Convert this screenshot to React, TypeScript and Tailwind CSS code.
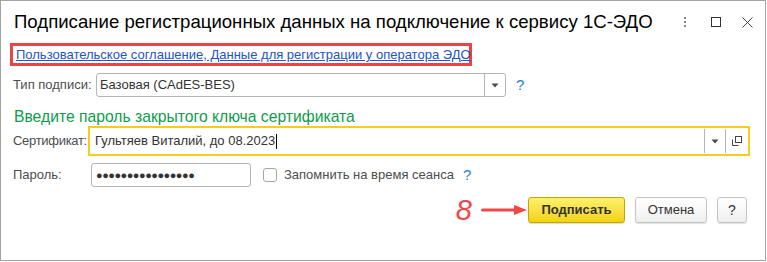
import React from 'react';

const font = { fontFamily: '"Liberation Sans", Arial, sans-serif' };

function Help() {
  return <span className="text-[15px] leading-none text-[#1a84d0]">?</span>;
}

function DropArrow() {
  return (
    <svg width="8" height="5" viewBox="0 0 8 5">
      <path d="M0.5 0.5h7L4 4.5z" fill="#4a4a4a" />
    </svg>
  );
}

export default function App() {
  return (
    <div className="bg-white w-[767px] h-[262px]" style={font}>
      <div className="w-[766px] h-[261px] border border-[#a3a3a3] flex flex-col">
        {/* header */}
        <div className="flex items-start h-[42px] pl-[13px] pt-[10px]">
          <h1 className="text-[18.6px] leading-[22px] text-black whitespace-nowrap">
            Подписание регистрационных данных на подключение к сервису 1С-ЭДО
          </h1>
          <div className="ml-auto flex items-center pt-[5px] pr-[12px]">
            <svg width="4" height="12" viewBox="0 0 4 12" className="mr-[24px]">
              <rect x="1" y="1" width="2" height="2" fill="#8a8a8a" />
              <rect x="1" y="5" width="2" height="2" fill="#8a8a8a" />
              <rect x="1" y="9" width="2" height="2" fill="#8a8a8a" />
            </svg>
            <svg width="10" height="10" viewBox="0 0 10 10" className="mr-[21px]">
              <rect x="0.5" y="0.5" width="9" height="9" fill="none" stroke="#333" />
            </svg>
            <svg width="11" height="11" viewBox="0 0 11 11">
              <path d="M0.5 0.5l10 10M10.5 0.5l-10 10" stroke="#444" strokeWidth="1" />
            </svg>
          </div>
        </div>

        {/* link in annotation frame */}
        <div className="ml-[9px] w-[462px] h-[23px] border-[3px] border-[#ec4346] flex items-center pl-[3px]">
          <a href="#" className="text-[13px] leading-[15px] text-[#2054c8] underline whitespace-nowrap">
            Пользовательское соглашение, Данные для регистрации у оператора ЭДО
          </a>
        </div>

        {/* signature type */}
        <div className="flex items-center mt-[7px] pl-[12px] h-[24px]">
          <span className="w-[83px] shrink-0 text-[13px] text-[#4d4d4d] whitespace-nowrap">Тип подписи:</span>
          <div className="w-[410px] h-[24px] border border-[#b5b5b5] rounded-[3px] flex items-center">
            <span className="flex-1 pl-[3px] text-[13px] text-[#333]">Базовая (CAdES-BES)</span>
            <div className="w-[21px] h-full border-l border-[#b5b5b5] flex items-center justify-center">
              <DropArrow />
            </div>
          </div>
          <span className="ml-[10px]"><Help /></span>
        </div>

        {/* heading */}
        <div className="pl-[13px] mt-[11px] text-[15.7px] leading-[18px] text-[#0e9b4a] whitespace-nowrap">
          Введите пароль закрытого ключа сертификата
        </div>

        {/* certificate */}
        <div className="flex items-center mt-[0px] pl-[12px] h-[30px]">
          <span className="w-[75px] shrink-0 text-[13px] tracking-[-0.3px] text-[#4d4d4d] whitespace-nowrap">Сертификат:</span>
          <div className="w-[662px] h-[30px] border-2 border-[#f8cb1c] flex items-center">
            <span className="flex-1 pl-[5px] text-[13px] text-[#333] flex items-center">
              Гультяев Виталий, до 08.2023
              <span className="inline-block w-px h-[15px] bg-black ml-[1px]" />
            </span>
            <div className="w-[21px] h-[24px] border-l border-[#b5b5b5] flex items-center justify-center">
              <DropArrow />
            </div>
            <div className="w-[23px] h-[24px] border-l border-[#b5b5b5] flex items-center justify-center">
              <svg width="10" height="10" viewBox="0 0 10 10">
                <rect x="3.5" y="0.5" width="6" height="6" fill="none" stroke="#444" />
                <path d="M0.5 3.5v6h6" fill="none" stroke="#444" />
              </svg>
            </div>
          </div>
        </div>

        {/* password */}
        <div className="flex items-center mt-[7px] pl-[12px] h-[24px]">
          <span className="w-[78px] shrink-0 text-[13px] text-[#4d4d4d]">Пароль:</span>
          <div className="w-[160px] h-[24px] border border-[#b5b5b5] rounded-[3px] flex items-center pl-[4px]">
            <span className="text-[11px] tracking-[-0.5px] text-[#333]">●●●●●●●●●●●●●●●●</span>
          </div>
          <span className="ml-[12px] w-[14px] h-[14px] border border-[#a5a5a5] rounded-[3px] bg-white" />
          <span className="ml-[7px] text-[13px] text-[#4d4d4d]">Запомнить на время сеанса</span>
          <span className="ml-[9px]"><Help /></span>
        </div>

        {/* buttons */}
        <div className="flex items-center justify-end mt-[10px] pr-[18px] h-[26px]">
          <span className="text-[29px] leading-none italic text-[#f04848] mr-[9px]">8</span>
          <svg width="47" height="12" viewBox="0 0 47 12">
            <path d="M1.5 6h34" stroke="#f04848" strokeWidth="3" strokeLinecap="round" />
            <path d="M33 1l13 5-13 5z" fill="#f04848" />
          </svg>
          <button className="w-[97px] h-[26px] rounded-[3px] border border-[#c2a800] bg-gradient-to-b from-[#fff16a] to-[#f2d200] text-[13px] font-bold text-[#333] shadow-[0_1px_1px_rgba(0,0,0,0.15)]">
            Подписать
          </button>
          <button className="ml-[10px] w-[72px] h-[26px] rounded-[3px] border border-[#c4c4c4] bg-gradient-to-b from-white to-[#efefef] text-[13px] text-[#333] shadow-[0_1px_1px_rgba(0,0,0,0.12)]">
            Отмена
          </button>
          <button className="ml-[10px] w-[30px] h-[26px] rounded-[3px] border border-[#c4c4c4] bg-gradient-to-b from-white to-[#efefef] text-[14px] text-[#333] shadow-[0_1px_1px_rgba(0,0,0,0.12)]">
            ?
          </button>
        </div>
      </div>
    </div>
  );
}
